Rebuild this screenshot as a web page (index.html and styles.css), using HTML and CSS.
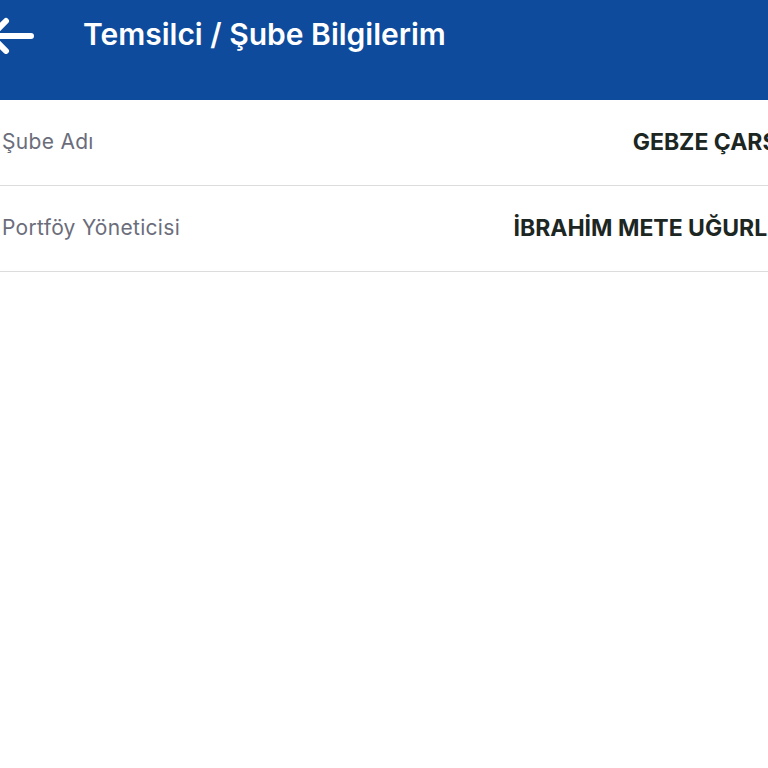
FILE: index.html
```html
<!DOCTYPE html>
<html lang="tr">
<head>
<meta charset="utf-8">
<link rel="stylesheet" href="styles.css">
</head>
<body>
<div class="screen">
  <header class="topbar">
    <svg class="back" width="44" height="44" viewBox="0 0 44 44" aria-hidden="true">
      <path d="M41 26 H0 M1 26 L16 11 M1 26 L16 41" fill="none" stroke="#fff" stroke-width="6" stroke-linecap="round" stroke-linejoin="round"/>
    </svg>
    <h1 class="title">Temsilci / Şube Bilgilerim</h1>
  </header>
  <div class="list">
    <div class="row">
      <span class="label">Şube Adı</span>
      <span class="value">GEBZE ÇARŞI</span>
    </div>
    <div class="row">
      <span class="label">Portföy Yöneticisi</span>
      <span class="value">İBRAHİM METE UĞURLU</span>
    </div>
  </div>
</div>
</body>
</html>
```
FILE: styles.css
```css
html, body {
  margin: 0;
  padding: 0;
  background: #ffffff;
  overflow: hidden;
}
.screen {
  width: 784px;
  font-family: "Inter", "Noto Sans", sans-serif;
}
.topbar {
  height: 100px;
  background: #0e4b9c;
  display: flex;
  align-items: flex-start;
  box-sizing: border-box;
  padding-top: 8px;
  margin-left: -10px;
}
.back {
  flex: none;
  margin-top: 2px;
}
.title {
  margin: 0 0 0 49px;
  color: #ffffff;
  font-size: 30px;
  font-weight: 600;
  line-height: 52px;
  letter-spacing: 0;
}
.list {
  display: flex;
  flex-direction: column;
}
.row {
  height: 86px;
  display: flex;
  align-items: center;
  justify-content: space-between;
  border-bottom: 1px solid #dcdcdc;
  box-sizing: border-box;
  padding-left: 2px;
  padding-bottom: 2px;
}
.label {
  color: #6b6d7b;
  font-size: 21px;
  font-weight: 400;
  letter-spacing: 0.3px;
}
.value {
  color: #1c2622;
  font-size: 23px;
  font-weight: 700;
}
```
